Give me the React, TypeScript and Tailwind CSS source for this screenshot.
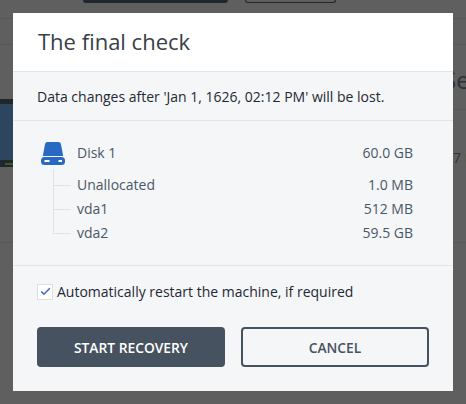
import React from 'react';
import { Check } from 'lucide-react';

const font = { fontFamily: '"Open Sans", sans-serif' };

const partitions = [
  { name: 'Unallocated', size: '1.0 MB' },
  { name: 'vda1', size: '512 MB' },
  { name: 'vda2', size: '59.5 GB' },
];

// Page that sits dimmed behind the dialog
const Backdrop: React.FC = () => (
  <div className="flex h-[404px] w-[466px] flex-col overflow-hidden bg-[#5f5f5f]">
    <div className="flex h-[19px] shrink-0 gap-[17px] border-b border-[#585858] pl-[83px]">
      <div className="h-[3px] w-[145px] rounded-b-[4px] bg-[#1f262d]" />
      <div className="h-[3px] w-[91px] rounded-b-[4px] border-x border-b border-[#1f262d]" />
    </div>
    <div className="h-[26px] shrink-0 border-b border-[#585858]" />
    <div className="flex h-[198px] shrink-0 border-b border-[#585858]">
      <div className="flex w-[14px] shrink-0 flex-col pt-[54px]">
        <div className="h-[5px] bg-[#20262b]" />
        <div className="h-[56px] bg-[#2c465f]" />
        <div className="flex h-[7px] items-center bg-[#20262b] pl-[5px]">
          <div className="h-[2px] w-[8px] bg-[#3c5a24]" />
        </div>
      </div>
      <div className="flex-1">
        <div className="flex h-[65px] items-center whitespace-nowrap border-b border-[#585858] pl-[429px] pt-[5px] text-[24px] leading-none text-[#2d3135]">
          Se
        </div>
        <div className="whitespace-nowrap pl-[439px] pt-[37px] text-[14px] text-[#333537]">7 M</div>
      </div>
    </div>
  </div>
);

const DiskIcon: React.FC = () => (
  <svg width="24" height="23" viewBox="0 0 24 23" className="shrink-0">
    <path d="M6.5 0h11a2.5 2.5 0 0 1 2.4 2L22.2 14H1.8L4.1 2A2.5 2.5 0 0 1 6.5 0Z" fill="#2869c4" />
    <rect x="0" y="15" width="24" height="8" rx="3.5" fill="#2869c4" />
    <rect x="3.5" y="18" width="5" height="2" fill="#fff" />
    <rect x="17.5" y="18" width="3.5" height="2" fill="#fff" />
  </svg>
);

const TreeLines: React.FC = () => (
  <svg width="18" height="65" viewBox="0 0 18 65" className="shrink-0">
    <path d="M0.5 0V64.5H17.5M0.5 16.5H17.5M0.5 40.5H17.5" fill="none" stroke="#dfe3e6" />
  </svg>
);

export default function App() {
  return (
    <div className="relative h-[404px] w-[466px] overflow-hidden" style={font}>
      <Backdrop />

      <div className="absolute left-[13px] top-[13px] flex h-[378px] w-[440px] flex-col bg-[#f4f6f8]">
        {/* Header */}
        <div className="flex h-[59px] shrink-0 items-center border-b border-[#e2e5e8] bg-white pb-[1px] pl-[25px] text-[22px] text-[#374048]">
          The final check
        </div>

        {/* Warning */}
        <div className="flex h-[49px] shrink-0 items-center border-b border-[#e2e5e8] pl-[24px] text-[14px] text-[#1f2933]">
          Data changes after 'Jan 1, 1626, 02:12 PM' will be lost.
        </div>

        {/* Disk layout */}
        <div className="h-[145px] shrink-0 border-b border-[#e2e5e8] pl-[28px] pr-[40px] pt-[21px] text-[14px] text-[#4a5866]">
          <div className="flex h-[23px] items-center">
            <DiskIcon />
            <span className="ml-[12px] -mt-[2px]">Disk 1</span>
            <span className="ml-auto -mt-[2px]">60.0 GB</span>
          </div>
          <div className="mt-[4px] flex pl-[12px]">
            <TreeLines />
            <div className="ml-[6px] flex flex-1 flex-col pt-[3px]">
              {partitions.map(p => (
                <div key={p.name} className="flex h-[24px] items-center justify-between">
                  <span>{p.name}</span>
                  <span>{p.size}</span>
                </div>
              ))}
            </div>
          </div>
        </div>

        {/* Options and actions */}
        <div className="flex flex-1 flex-col px-[24px] pt-[17px]">
          <label className="flex h-[17px] items-center gap-[4px] text-[14px] text-[#1f2933]">
            <span className="flex h-[16px] w-[16px] items-center justify-center border border-[#dde1e5] bg-white">
              <Check size={13} strokeWidth={3} strokeLinecap="butt" strokeLinejoin="miter" className="text-[#3f6fb5]" />
            </span>
            Automatically restart the machine, if required
          </label>
          <div className="mt-[27px] flex gap-[16px]">
            <button className="h-[40px] w-[188px] rounded-[4px] bg-[#46525f] pt-[2px] text-[13.8px] font-semibold text-white">
              START RECOVERY
            </button>
            <button className="h-[40px] w-[188px] rounded-[4px] border-2 border-[#46525f] pt-[2px] text-[13.8px] font-semibold text-[#46525f]">
              CANCEL
            </button>
          </div>
        </div>
      </div>
    </div>
  );
}
